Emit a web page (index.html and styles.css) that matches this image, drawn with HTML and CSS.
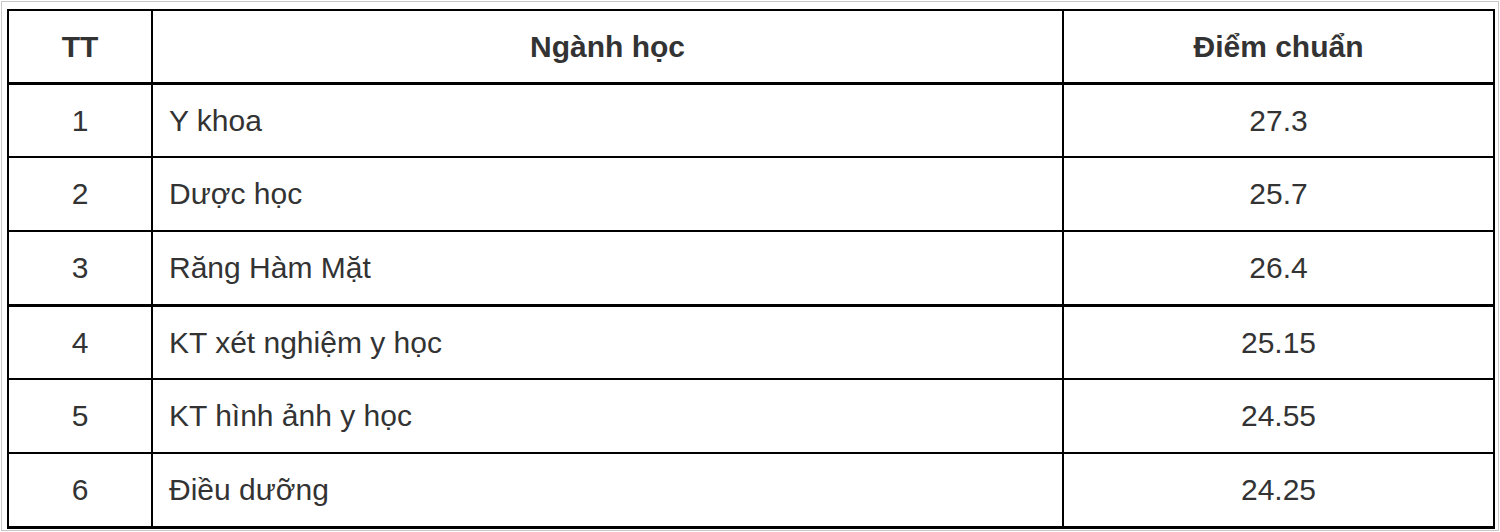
FILE: index.html
```html
<!DOCTYPE html>
<html lang="vi">
<head>
<meta charset="utf-8">
<title>Điểm chuẩn</title>
<link rel="stylesheet" href="styles.css">
</head>
<body>
<div class="frame">
  <table class="scores">
    <colgroup>
      <col class="c-tt">
      <col class="c-name">
      <col class="c-score">
    </colgroup>
    <thead>
      <tr class="thick">
        <th>TT</th>
        <th>Ngành học</th>
        <th>Điểm chuẩn</th>
      </tr>
    </thead>
    <tbody>
      <tr><td class="num">1</td><td class="name">Y khoa</td><td class="num">27.3</td></tr>
      <tr class="tall"><td class="num">2</td><td class="name">Dược học</td><td class="num">25.7</td></tr>
      <tr class="thick heavy"><td class="num">3</td><td class="name">Răng Hàm Mặt</td><td class="num">26.4</td></tr>
      <tr><td class="num">4</td><td class="name">KT xét nghiệm y học</td><td class="num">25.15</td></tr>
      <tr class="tall"><td class="num">5</td><td class="name">KT hình ảnh y học</td><td class="num">24.55</td></tr>
      <tr class="thick heavy"><td class="num">6</td><td class="name">Điều dưỡng</td><td class="num">24.25</td></tr>
    </tbody>
  </table>
</div>
</body>
</html>
```

FILE: styles.css
```css
html, body {
  margin: 0;
  padding: 0;
  background: #ffffff;
}

body {
  font-family: "Liberation Sans", Arial, sans-serif;
  color: #333333;
}

.frame {
  box-sizing: border-box;
  width: 1498px;
  height: 530px;
  margin: 1px 0 0 1px;
  border: 1px solid #c9c9c9;
  padding: 7px 4px 0 5px;
}

.scores {
  border-collapse: separate;
  border-spacing: 0;
  table-layout: fixed;
  width: 1486px;
  border-top: 2px solid #000;
  border-left: 2px solid #000;
}

.c-tt { width: 144px; }
.c-name { width: 911px; }
.c-score { width: 431px; }

.scores th,
.scores td {
  box-sizing: border-box;
  height: 73px;
  padding: 0 16px;
  border-right: 2px solid #000;
  border-bottom: 2px solid #000;
  font-size: 30px;
  line-height: 32px;
  vertical-align: middle;
}

.scores th {
  font-weight: bold;
  text-align: center;
}

.scores .tall td {
  height: 74px;
}

.scores .thick th,
.scores .thick td {
  height: 74px;
  border-bottom-width: 3px;
}

.scores .heavy td {
  height: 75px;
}

.scores td.num {
  text-align: center;
}

.scores td.name {
  text-align: left;
}
```
